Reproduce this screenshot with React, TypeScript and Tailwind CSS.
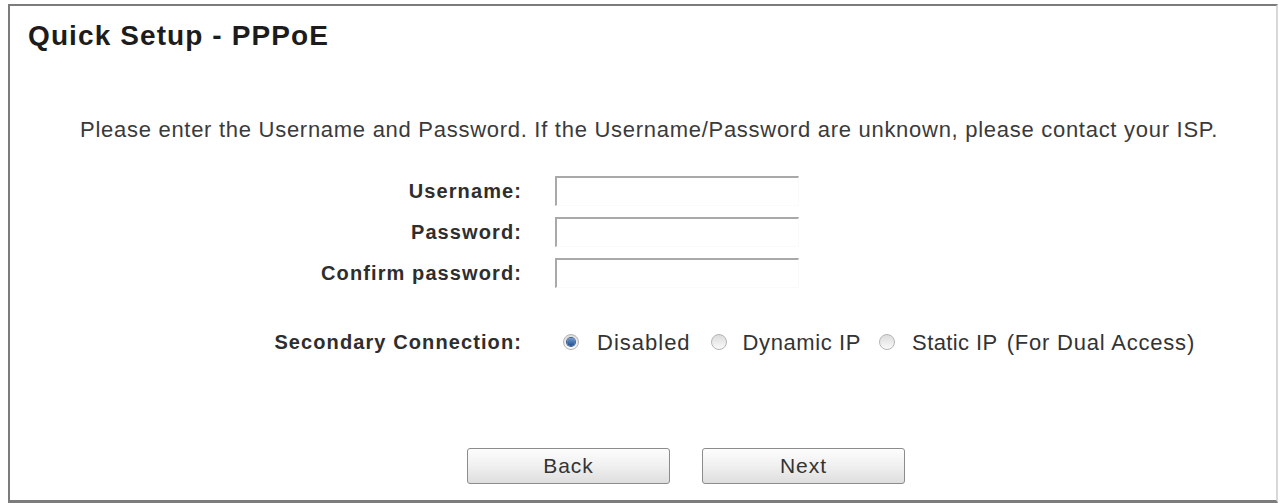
import React from 'react';

const font = { fontFamily: '"Liberation Sans", Arial, sans-serif' };

function Field({ label }: { label: string }) {
  return (
    <div className="flex items-center h-[30px]">
      <div className="w-[512px] text-right font-bold text-[20px] tracking-[1.1px] text-[#2e2e2e]">{label}</div>
      <input
        type="text"
        className="ml-[33px] w-[244px] h-[30px] border-t-2 border-l-2 border-r border-b border-t-[#a9a9a9] border-l-[#a9a9a9] border-r-[#fafafa] border-b-[#fafafa] bg-white outline-none"
      />
    </div>
  );
}

function Radio({ checked }: { checked?: boolean }) {
  return (
    <span className="inline-flex items-center justify-center w-[16px] h-[16px] rounded-full border border-[#b4b4b4] bg-gradient-to-b from-[#dcdcdc] to-[#fafafa]">
      {checked && <span className="w-[8px] h-[8px] rounded-full bg-gradient-to-b from-[#6f9ad0] to-[#1f4f92] ring-1 ring-[#3c5f8e]" />}
    </span>
  );
}

function Button({ children }: { children: React.ReactNode }) {
  return (
    <button className="w-[203px] h-[36px] rounded-[3px] border border-[#8c8c8c] bg-gradient-to-b from-[#fdfdfd] via-[#f0f0f0] to-[#dedede] text-[21px] tracking-[1px] text-[#333]">
      {children}
    </button>
  );
}

export default function App() {
  return (
    <div className="w-[1281px] h-[503px] bg-white pt-[4px] pl-[8px] pr-[3px]" style={font}>
      <div className="h-full flex flex-col border-2 border-b-[3px] border-[#7c7c7c] border-r-[#d8d8d8]">
        <h1 className="pl-[18px] pt-[16px] text-[28px] leading-none font-bold tracking-[1.1px] text-[#1c1c1c]">
          Quick Setup - PPPoE
        </h1>

        <p className="mt-[69px] pl-[70px] text-[22px] leading-none tracking-[0.72px] text-[#3a3a3a]">
          Please enter the Username and Password. If the Username/Password are unknown, please contact your ISP.
        </p>

        <div className="mt-[35px] flex flex-col gap-[11px]">
          <Field label="Username:" />
          <Field label="Password:" />
          <Field label="Confirm password:" />
        </div>

        <div className="mt-[39px] flex items-center h-[30px] text-[22px] text-[#333]">
          <div className="w-[512px] text-right font-bold text-[20px] tracking-[1.1px] text-[#2e2e2e]">Secondary Connection:</div>
          <div className="ml-[41px] flex items-center">
            <Radio checked />
            <span className="ml-[18px] tracking-[1px]">Disabled</span>
            <span className="ml-[20px]"><Radio /></span>
            <span className="ml-[16px] tracking-[0.6px]">Dynamic IP</span>
            <span className="ml-[18px]"><Radio /></span>
            <span className="ml-[17px] tracking-[0.4px]">Static IP</span>
            <span className="ml-[9px] tracking-[0.8px]">(For Dual Access)</span>
          </div>
        </div>

        <div className="mt-[91px] pl-[457px] flex gap-[32px]">
          <Button>Back</Button>
          <Button>Next</Button>
        </div>
      </div>
    </div>
  );
}
